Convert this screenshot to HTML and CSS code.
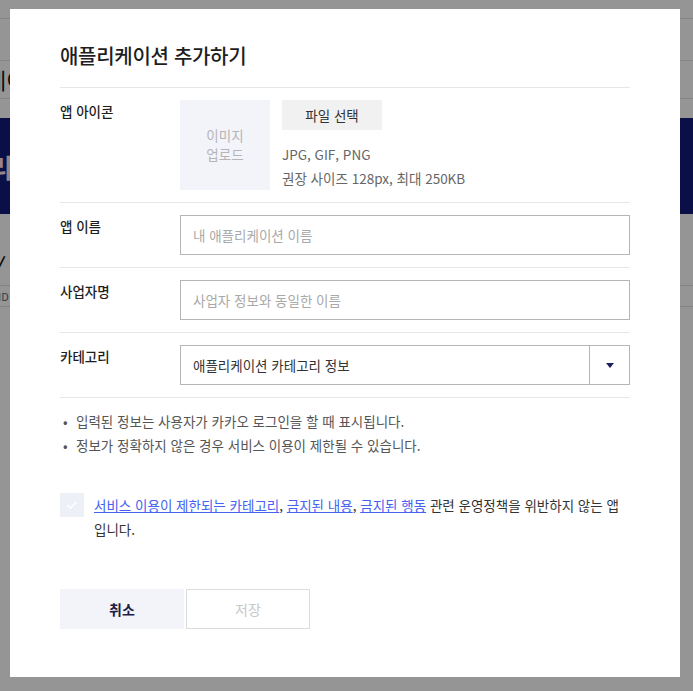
FILE: index.html
```html
<!DOCTYPE html>
<html lang="ko">
<head>
  <meta charset="UTF-8">
  <meta name="viewport" content="width=device-width, initial-scale=1.0">
  <title>애플리케이션 추가하기</title>
  <link rel="stylesheet" href="styles.css">
</head>
<body>
  <!-- page under the dialog -->
  <div class="page">
    <div class="page-inner">
      <div class="page-top"></div>
      <div class="page-head">
        <h1 class="page-title">내 애플리케이션</h1>
      </div>
      <div class="page-banner">
        <p class="banner-text">내 애플리케이션 개발</p>
      </div>
      <div class="page-path">/ 앱</div>
      <div class="page-tab">ID</div>
    </div>
  </div>

  <!-- dialog -->
  <div class="dim">
    <div class="modal">
      <h2 class="modal-title">애플리케이션 추가하기</h2>

      <form class="app-form">
        <div class="form-row">
          <label class="form-label">앱 아이콘</label>
          <div class="icon-field">
            <div class="icon-box">이미지<br>업로드</div>
            <div class="icon-info">
              <button type="button" class="file-btn">파일 선택</button>
              <p class="icon-desc">JPG, GIF, PNG<br>권장 사이즈 128px, 최대 250KB</p>
            </div>
          </div>
        </div>

        <div class="form-row">
          <label class="form-label" for="app-name">앱 이름</label>
          <input type="text" id="app-name" class="form-input" placeholder="내 애플리케이션 이름">
        </div>

        <div class="form-row">
          <label class="form-label" for="biz-name">사업자명</label>
          <input type="text" id="biz-name" class="form-input" placeholder="사업자 정보와 동일한 이름">
        </div>

        <div class="form-row">
          <label class="form-label">카테고리</label>
          <div class="form-select">
            <span class="select-value">애플리케이션 카테고리 정보</span>
            <span class="select-arrow"></span>
          </div>
        </div>
      </form>

      <ul class="notice">
        <li>입력된 정보는 사용자가 카카오 로그인을 할 때 표시됩니다.</li>
        <li>정보가 정확하지 않은 경우 서비스 이용이 제한될 수 있습니다.</li>
      </ul>

      <div class="agree">
        <span class="check">
          <svg width="14" height="14" viewBox="0 0 14 14"><path d="M2.5 7.2l3 3 6-6.2" fill="none" stroke="#fff" stroke-width="1.6"/></svg>
        </span>
        <p class="agree-text"><a href="#">서비스 이용이 제한되는 카테고리</a>, <a href="#">금지된 내용</a>, <a href="#">금지된 행동</a> 관련 운영정책을 위반하지 않는 앱 입니다.</p>
      </div>

      <div class="modal-btns">
        <button type="button" class="btn btn-cancel">취소</button>
        <button type="button" class="btn btn-save">저장</button>
      </div>
    </div>
  </div>
</body>
</html>
```

FILE: styles.css
```css
body {
  margin: 0;
  font-family: 'Noto Sans CJK KR', 'Noto Sans', sans-serif;
  color: #222;
  background: #fff;
  overflow: hidden;
}

/* page behind */
.page {
  display: flex;
  justify-content: center;
  height: 100vh;
}

.page-inner {
  flex: 0 0 1113px;
}

.page-top {
  height: 18px;
  border-bottom: 1px solid #e4e4e4;
}

.page-head {
  height: 37px;
  margin-top: 41px;
  border-top: 1px solid #e4e4e4;
  border-bottom: 1px solid #e4e4e4;
}

.page-title {
  margin: 0;
  padding: 4px 0 0 109px;
  font-size: 22px;
  font-weight: 400;
  line-height: 28px;
  color: #111;
}

.page-banner {
  height: 96px;
  margin-top: 19px;
  background: #121a7c;
}

.banner-text {
  margin: 0;
  padding: 30px 0 0 120px;
  font-size: 26px;
  font-weight: 700;
  color: #ffe3ea;
}

.page-path {
  height: 33px;
  padding: 38px 0 0 205px;
  font-size: 18px;
  font-weight: 700;
  font-style: italic;
  line-height: 24px;
  color: #111;
  border-bottom: 1px solid #e0e0e0;
}

.page-tab {
  height: 20px;
  padding-left: 208px;
  font-size: 11px;
  line-height: 20px;
  color: #666;
  border-bottom: 1px solid #e0e0e0;
}

/* dialog */
.dim {
  position: fixed;
  top: 0;
  left: 0;
  right: 0;
  bottom: 0;
  background: rgba(0, 0, 0, 0.416);
  display: flex;
  align-items: flex-start;
  padding: 9px 0 0 10px;
}

.modal {
  width: 670px;
  box-sizing: border-box;
  background: #fff;
  padding: 34px 50px 48px;
}

.modal-title {
  margin: 0 0 18px;
  font-size: 20px;
  font-weight: 500;
  letter-spacing: -0.3px;
  line-height: 26px;
  color: #1e1e1e;
}

.app-form {
  margin: 0;
  border-bottom: 1px solid #e6e6e6;
}

.form-row {
  display: flex;
  padding: 12px 0;
  border-top: 1px solid #e6e6e6;
}

.form-label {
  flex: 0 0 120px;
  font-size: 13.5px;
  font-weight: 500;
  line-height: 22px;
  color: #1e1e1e;
}

.icon-field {
  display: flex;
  gap: 12px;
}

.icon-box {
  width: 90px;
  height: 90px;
  background: #f3f4f9;
  display: flex;
  align-items: center;
  justify-content: center;
  text-align: center;
  font-size: 13.5px;
  line-height: 19px;
  color: #b4b4b8;
}

.file-btn {
  width: 100px;
  height: 30px;
  border: none;
  background: #f1f1f1;
  font-family: inherit;
  font-size: 13.5px;
  color: #333;
  cursor: pointer;
}

.icon-desc {
  margin: 0;
  padding-top: 12px;
  font-size: 13.5px;
  line-height: 24px;
  color: #666;
}

.form-input {
  flex: 1;
  height: 40px;
  box-sizing: border-box;
  border: 1px solid #b5b5b5;
  border-radius: 0;
  padding: 0 12px;
  font-family: inherit;
  font-size: 13.5px;
  color: #333;
  outline: none;
}

.form-input::placeholder {
  color: #a9a9a9;
}

.form-select {
  flex: 1;
  height: 40px;
  box-sizing: border-box;
  border: 1px solid #b5b5b5;
  display: flex;
  align-items: center;
}

.select-value {
  flex: 1;
  padding-left: 12px;
  font-size: 13.5px;
  color: #333;
}

.select-arrow {
  width: 39px;
  height: 38px;
  border-left: 1px solid #b5b5b5;
  display: flex;
  align-items: center;
  justify-content: center;
}

.select-arrow::after {
  content: "";
  border-left: 4px solid transparent;
  border-right: 4px solid transparent;
  border-top: 5px solid #1b1f5e;
}

.notice {
  list-style: none;
  margin: 0;
  padding: 11px 0 0;
}

.notice li {
  position: relative;
  padding-left: 16px;
  font-size: 13.5px;
  line-height: 24px;
  color: #555;
}

.notice li::before {
  content: "•";
  position: absolute;
  left: 3px;
  top: 0;
  color: #555;
}

.agree {
  display: flex;
  gap: 10px;
  margin-top: 36px;
}

.check {
  flex: 0 0 24px;
  height: 24px;
  background: #eef0f7;
  display: flex;
  align-items: center;
  justify-content: center;
}

.agree-text {
  margin: 0;
  font-size: 13.5px;
  line-height: 24px;
  color: #333;
}

.agree-text a {
  color: #4562f0;
}

.modal-btns {
  display: flex;
  gap: 2px;
  margin-top: 48px;
}

.btn {
  width: 124px;
  height: 40px;
  font-family: inherit;
  font-size: 14px;
  cursor: pointer;
}

.btn-cancel {
  border: none;
  background: #f3f4f9;
  font-weight: 700;
  color: #1d2046;
}

.btn-save {
  border: 1px solid #dcdcdc;
  background: #fff;
  color: #c8c8c8;
}
```
